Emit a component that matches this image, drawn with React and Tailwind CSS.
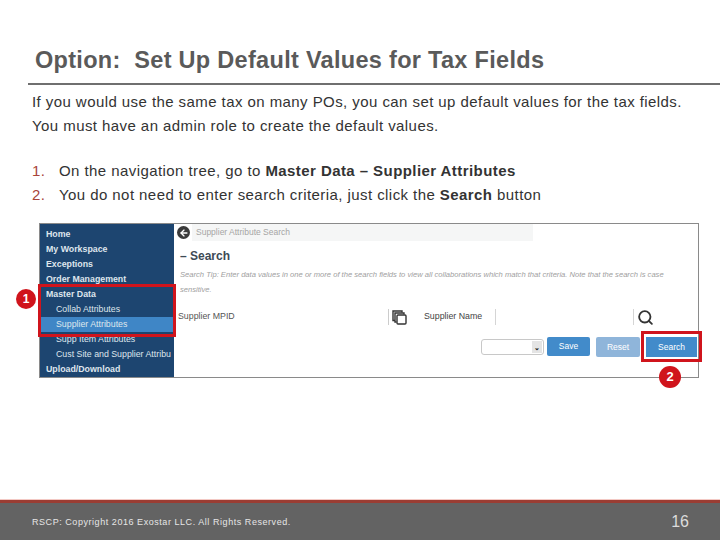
import { ArrowLeft, Search } from "lucide-react";

const NAV = [
  { label: "Home", top: true },
  { label: "My Workspace", top: true },
  { label: "Exceptions", top: true },
  { label: "Order Management", top: true },
  { label: "Master Data", top: true },
  { label: "Collab Attributes" },
  { label: "Supplier Attributes", active: true },
  { label: "Supp Item Attributes" },
  { label: "Cust Site and Supplier Attribu" },
  { label: "Upload/Download", top: true },
];

function Sidebar() {
  return (
    <div className="w-[134px] shrink-0 bg-[#1d4570] pt-[3px] text-[8.8px] leading-[15px] text-[#dfe6ed]">
      {NAV.map((item) => (
        <div
          key={item.label}
          className={`h-[15px] whitespace-nowrap ${item.top ? "pl-[6px] font-bold" : "pl-[16px]"} ${item.active ? "bg-[#3f86c6]" : ""}`}
        >
          {item.label}
        </div>
      ))}
    </div>
  );
}

function CopyIcon() {
  return (
    <svg width="15" height="15" viewBox="0 0 15 15" fill="none" stroke="#333" strokeWidth="1.4">
      <path d="M10 2.5V1H1v9.5h2" />
      <path d="M12 4.5V3H3v9h1.5" />
      <rect x="5" y="5" width="9" height="9" rx="1" fill="#fff" />
    </svg>
  );
}

function SearchPanel() {
  return (
    <div className="relative ml-[39px] mr-[21px] mt-[17px] flex h-[155px] border border-[#8a8a8a] bg-white">
      <Sidebar />
      <div className="min-w-0 flex-1">
        <div className="flex h-[17px] items-center gap-[2px] pl-[3px]">
          <div className="flex h-[13px] w-[13px] items-center justify-center rounded-full bg-[#3a3a3a] text-white">
            <ArrowLeft size={10} strokeWidth={3.2} />
          </div>
          <div className="flex h-[17px] w-[341px] items-center bg-[#f5f6f6] pl-[4px] text-[8.5px] text-[#a5a5a5]">
            Supplier Attribute Search
          </div>
        </div>
        <div className="mt-[8px] pl-[6px] text-[12px] leading-[14px] font-bold text-[#3d4a55]">– Search</div>
        <p className="mt-[4px] pl-[6px] pr-[4px] text-[7.6px] leading-[15px] text-[#a0a0a0] italic">
          Search Tip: Enter data values in one or more of the search fields to view all collaborations which match that criteria. Note that the search is case sensitive.
        </p>
        <div className="mt-[10px] flex h-[20px] items-center text-[8.8px] text-[#555]">
          <div className="w-[70px] pl-[4px]">Supplier MPID</div>
          <div className="ml-[144px] h-[16px] w-[1px] bg-[#ccc]" />
          <div className="ml-[3px]">
            <CopyIcon />
          </div>
          <div className="ml-[17px] w-[71px] text-[#444]">Supplier Name</div>
          <div className="h-[16px] w-[139px] border-x border-[#d5d5d5]" />
          <Search size={17} strokeWidth={2.6} className="ml-[3px] text-[#333]" />
        </div>
        <div className="mt-[10px] flex items-start justify-end text-[8.5px] text-white">
          <div className="mt-[2px] flex h-[16px] w-[63px] items-center justify-end rounded-[3px] border border-[#c8c8c8] bg-white pr-[1px]">
            <span className="flex h-[12px] w-[10px] items-center justify-center bg-[#e4e4e4] text-[7px] leading-none font-bold text-[#222]">⌄</span>
          </div>
          <div className="ml-[3px] flex h-[19px] w-[43px] items-center justify-center rounded-[2px] bg-[#428bca]">Save</div>
          <div className="ml-[6px] flex h-[20px] w-[44px] items-center justify-center rounded-[2px] bg-[#8fb5da]">Reset</div>
          <div className="ml-[6px] mr-[1px] flex h-[20px] w-[51px] items-center justify-center bg-[#428bca]">Search</div>
        </div>
      </div>

      {/* Callouts over the screenshot */}
      <div className="absolute left-[-2px] top-[60px] h-[53px] w-[138px] border-[3px] border-[#d0141c]" />
      <div className="absolute left-[601px] top-[107px] h-[31px] w-[61px] border-[3px] border-[#d0141c]" />
      <div className="absolute left-[-24px] top-[65px] flex h-[20px] w-[20px] items-center justify-center rounded-full bg-[#d0141c] text-[12px] font-bold text-white">1</div>
      <div className="absolute left-[619px] top-[142px] flex h-[22px] w-[22px] items-center justify-center rounded-full bg-[#d0141c] text-[13px] font-bold text-white">2</div>
    </div>
  );
}

export default function App() {
  return (
    <div className="flex h-[540px] w-[720px] flex-col overflow-hidden bg-white font-['Liberation_Sans',Arial,sans-serif]">
      <div className="ml-[28px] mt-[45px] h-[40px] border-b-2 border-[#6f6f6f] pl-[7px] text-[23.5px] leading-[31px] font-bold tracking-[0.3px] whitespace-pre text-[#5a5a5a]">
        Option:  Set Up Default Values for Tax Fields
      </div>

      <div className="mt-[5px] pl-[32px] text-[15px] leading-[23.5px] tracking-[0.43px] text-[#333]">
        <p>If you would use the same tax on many POs, you can set up default values for the tax fields.</p>
        <p>You must have an admin role to create the default values.</p>
        <ol className="mt-[22px]">
          <li className="flex">
            <span className="w-[27px] text-[#a8443a]">1.</span>
            <span>
              On the navigation tree, go to <b>Master Data – Supplier Attributes</b>
            </span>
          </li>
          <li className="flex">
            <span className="w-[27px] text-[#a8443a]">2.</span>
            <span>
              You do not need to enter search criteria, just click the <b>Search</b> button
            </span>
          </li>
        </ol>
      </div>

      <SearchPanel />

      <footer className="mt-auto">
        <div className="h-[1px] bg-[#f3c9c4]" />
        <div className="h-[3px] bg-[#9a3d33]" />
        <div className="flex h-[37px] items-center justify-between bg-[#636363] pl-[32px] pr-[31px]">
          <span className="mt-[2px] text-[9px] tracking-[0.55px] text-[#e6e6e6]">RSCP: Copyright 2016 Exostar LLC. All Rights Reserved.</span>
          <span className="text-[16px] text-[#dcdcdc]">16</span>
        </div>
      </footer>
    </div>
  );
}
